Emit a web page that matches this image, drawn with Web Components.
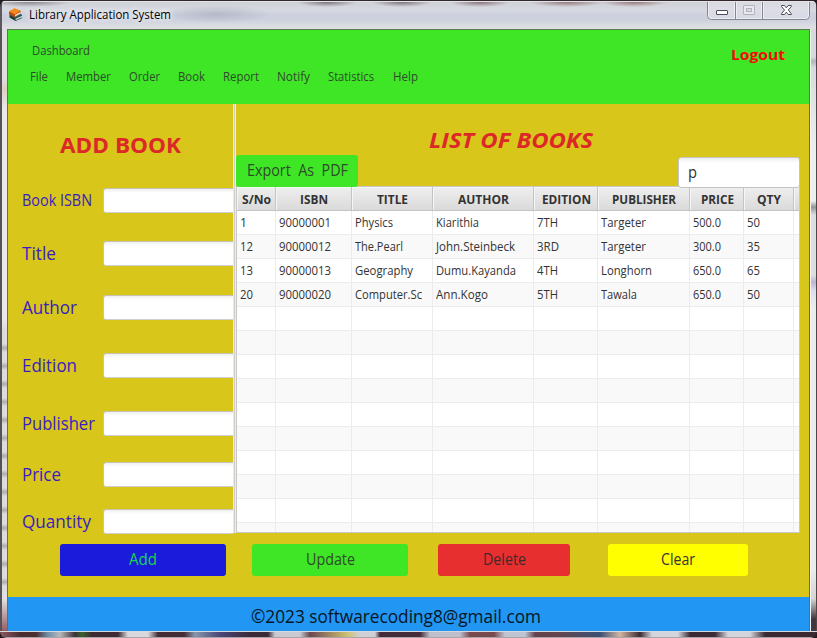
<!DOCTYPE html>
<html lang="en">
<head>
<meta charset="utf-8">
<title>Library Application System</title>
<style>
  html, body { margin: 0; width: 817px; height: 638px; overflow: hidden; background: #241c22; }
  body { font-family: "Open Sans", "Noto Sans", sans-serif; color: #333; }
</style>
</head>
<body>
<app-window></app-window>

<script>
const define = (name, html, init) => {
  const t = document.createElement('template');
  t.innerHTML = html;
  customElements.define(name, class extends HTMLElement {
    connectedCallback() {
      if (this.shadowRoot) return;
      this.attachShadow({ mode: 'open' }).append(t.content.cloneNode(true));
      if (init) init(this, this.shadowRoot);
    }
  });
};

// Text condensed to a given advance width: <fit-text w="57">
define('fit-text', `<style>
    :host { display: block; flex: none; text-align: left; }
    span { display: inline-block; white-space: pre; transform-origin: 0 50%; vertical-align: top; }
  </style><span><slot></slot></span>`, (el, root) => {
  const w = +el.getAttribute('w'), s = root.querySelector('span');
  el.style.width = w + 'px';
  const fit = () => {
    const n = s.offsetWidth;
    if (!n) return;
    s.style.transform = 'none';
    s.style.transform = `scaleX(${w / s.getBoundingClientRect().width})`;
  };
  fit();
  requestAnimationFrame(fit);
});

define('title-bar', `
  <style>
    :host { display: flex; height: 27px; padding-left: 6px; align-items: flex-start; box-sizing: border-box;
      color: #000; font-size: 12px; line-height: 20px;
      background:
        radial-gradient(ellipse 55px 9px at 215px 12px, rgba(120,125,150,.3), transparent),
        radial-gradient(ellipse 42px 5px at 28px 0, rgba(70,60,70,.5), transparent),
        radial-gradient(ellipse 30px 5px at 325px 0, rgba(70,50,62,.6), transparent),
        radial-gradient(ellipse 30px 5px at 400px 0, rgba(70,50,62,.6), transparent),
        radial-gradient(ellipse 30px 5px at 478px 0, rgba(90,50,55,.6), transparent),
        radial-gradient(ellipse 38px 5px at 565px 0, rgba(110,60,62,.6), transparent),
        radial-gradient(ellipse 34px 5px at 632px 0, rgba(110,60,62,.6), transparent),
        linear-gradient(#cfd1d6, #d6d9e1 30%, #cdd1de 48%, #cdd1de 65%, #dedfe1 95%); }
    svg { display: block; }
    .icon { margin: 5px 6px 0 0; }
    .name { margin-top: 3px; text-shadow: 0 0 5px #fff, 0 0 8px #fff; }
    .ctl { margin: 0 6px 0 auto; }
  </style>
  <svg class="icon" width="15" height="16" viewBox="0 0 15 16">
    <path d="M1.500 8 8 5l6 3v3L7.500 14 1.500 10.500z" fill="#1c4038"/>
    <path d="M7.500 11.800 14 8.800v1.500l-6.500 3z" fill="#cfe0da"/>
    <path d="M1.500 7.500 7.500 5l6.500 3-6.500 3z" fill="#1b6a86"/>
    <path d="M1 4.500v3l6 3L12.500 7V3.500z" fill="#b84d12"/>
    <path d="M7 8 12.500 5v1.400L7 9.400z" fill="#f4efe0"/>
    <path d="M1 4.300 6.500 1.300l6 2.300L7 7.400z" fill="#f58a1c"/>
  </svg>
  <fit-text class="name" w="142">Library Application System</fit-text>
  <svg class="ctl" width="103" height="19" viewBox="0 0 103 19">
    <path d="M.5 0V13.500q0 4 4 4H98.500q4 0 4-4V0" fill="rgba(225,226,234,.55)" stroke="#85858f"/>
    <path d="M1.500 0V13.500q0 3 3 3H98.500q3 0 3-3V0M27.500 0v17M29.500 0v17M54.500 0v17M56.500 0v17" fill="none" stroke="#f1f1f5" stroke-opacity=".8"/>
    <path d="M28.500 0v17M55.500 0v17" stroke="#85858f"/>
    <rect x="9.500" y="8.500" width="11" height="4" rx=".5" fill="#fff" stroke="#4b4b5a"/>
    <rect x="36.500" y="3.500" width="11" height="9" rx=".5" fill="#e8e8ee" stroke="#b2b2bc"/>
    <rect x="39.500" y="6.500" width="5" height="3" fill="#d8d9e2" stroke="#b2b2bc"/>
    <path d="M74.500 3.500h3l1.800 2.300 1.800-2.300h3.200v1L81.300 8l3 3.700v.8h-3.200l-1.800-2.300-1.800 2.300h-3v-.8l3-3.700-3-3.500z" fill="#fff" stroke="#4b4b5a"/>
  </svg>`);

define('menu-bar', `
  <style>
    :host { display: flex; flex: none; justify-content: space-between; height: 74px; background: #3ee626; box-sizing: border-box;
      padding: 10px 24px 0 22px; font-size: 12px; line-height: 22px; color: #2f4b2b; }
    nav { display: flex; gap: 18px; margin-top: 4px; }
    .dash { margin-left: 2px; }
    .logout { color: #f50b05; font-weight: 700; font-size: 15px; margin-top: 3px; }
  </style>
  <div>
    <fit-text class="dash" w="58">Dashboard</fit-text>
    <nav>
      <fit-text w="18">File</fit-text><fit-text w="45">Member</fit-text><fit-text w="31">Order</fit-text>
      <fit-text w="27">Book</fit-text><fit-text w="36">Report</fit-text><fit-text w="33">Notify</fit-text>
      <fit-text w="46">Statistics</fit-text><fit-text w="25" style="margin-left:1px">Help</fit-text>
    </nav>
  </div>
  <fit-text class="logout" w="54">Logout</fit-text>`);

define('form-field', `
  <style>
    :host { display: flex; height: 25px; color: #3a1dc0; }
    .l { width: 81px; flex: none; line-height: 24px; }
    .box { flex: 1; box-sizing: border-box; background: linear-gradient(#f0f0f0, #fff 4px); border: 1px solid #c6c4b4; border-bottom-color: #cfcfcf;
      border-right: 0; border-radius: 3px 0 0 3px; }
  </style>
  <div class="l"><slot></slot></div><div class="box"></div>`);

define('book-form', `
  <style>
    :host { display: block; width: 225px; flex: none; font-size: 18.500px; }
    h2 { margin: 0 0 0 52px; padding-top: 25px; font-size: 22px; line-height: 30px; color: #dc2828; }
    .fields { padding: 29px 0 0 14px; }
    .s { font-size: 15.500px; }
  </style>
  <h2><fit-text w="121">ADD BOOK</fit-text></h2>
  <div class="fields">
    <form-field class="s"><fit-text w="70">Book ISBN</fit-text></form-field>
    <form-field style="margin-top:28px"><fit-text w="34">Title</fit-text></form-field>
    <form-field style="margin-top:29px"><fit-text w="55">Author</fit-text></form-field>
    <form-field style="margin-top:33px"><fit-text w="55">Edition</fit-text></form-field>
    <form-field style="margin-top:33px"><fit-text w="73">Publisher</fit-text></form-field>
    <form-field style="margin-top:26px"><fit-text w="39">Price</fit-text></form-field>
    <form-field style="margin-top:22px"><fit-text w="69">Quantity</fit-text></form-field>
  </div>`);

define('book-table', `
  <style>
    :host { display: block; box-sizing: border-box; width: 564px; height: 347px; overflow: hidden; background: #fff;
      border: 1px solid #c8c8c8; font-size: 12px; }
    .r { display: grid; grid-template: 24px / 39px 76px 81px 101px 64px 92px 54px 50px 1fr; line-height: 24px; }
    .r > div { box-sizing: border-box; border-right: 1px solid #ececec; border-bottom: 1px solid #ececec; padding-left: 3px; display: flex; height: 24px; }
    .r > div:last-child { border-right: 0; }
    .r:nth-child(odd) { background: #f9f9f9; }
    .r.h { background: linear-gradient(#efefef, #d9d9d9); font-weight: 700; color: #333; line-height: 25px; }
    .r.h > div { border-color: #c4c4c4; padding: 0 0 0 1px; justify-content: center; box-shadow: inset 1px 1px #f6f6f6; }
  </style><div class="t"></div>`, (el, root) => {
  const cell = (v) => v ? `<div><fit-text w="${v[1]}">${v[0]}</fit-text></div>` : '<div></div>';
  const heads = [['S/No',29],['ISBN',28],['TITLE',31],['AUTHOR',51],['EDITION',49],['PUBLISHER',64],['PRICE',33],['QTY',24],null];
  const rows = [
    [['1',7],['90000001',52],['Physics',38],['Kiarithia',43],['7TH',21],['Targeter',45],['500.0',28],['50',13],null],
    [['12',13],['90000012',52],['The.Pearl',48],['John.Steinbeck',79],['3RD',22],['Targeter',45],['300.0',28],['35',13],null],
    [['13',13],['90000013',52],['Geography',58],['Dumu.Kayanda',80],['4TH',21],['Longhorn',51],['650.0',28],['65',13],null],
    [['20',13],['90000020',52],['Computer.Sc',67],['Ann.Kogo',52],['5TH',21],['Tawala',36],['650.0',28],['50',13],null]
  ];
  while (rows.length < 14) rows.push(Array(9).fill(null));
  root.querySelector('.t').innerHTML = `<div class="r h">${heads.map(cell).join('')}</div>` +
    rows.map(r => `<div class="r">${r.map(cell).join('')}</div>`).join('');
});

define('color-button', `
  <style>
    :host { display: flex; justify-content: center; box-sizing: border-box; height: 32px; line-height: 31px; border-radius: 3px; font-size: 15.500px; flex: none; }
  </style><slot></slot>`);

define('book-list', `
  <style>
    :host { display: block; width: 564px; flex: none; }
    h2 { margin: 0 0 0 193px; padding-top: 20px; font-size: 22px; line-height: 30px; font-style: italic; color: #dc2828; }
    .bar { display: flex; justify-content: space-between; height: 31px; margin-top: 1px; position: relative; }
    .export { width: 122px; background: #3ee626; color: #2f4b2b; }
    .search { box-sizing: border-box; width: 122px; height: 31px; margin-top: 2px; padding-left: 9px; line-height: 28px; font-size: 15.500px;
      border: 1px solid #c4c4c4; border-radius: 3px; background: linear-gradient(#eee, #fff 5px); }
  </style>
  <h2><fit-text w="164">LIST OF BOOKS</fit-text></h2>
  <div class="bar">
    <color-button class="export"><fit-text w="101">Export  As  PDF</fit-text></color-button>
    <div class="search"><fit-text w="9">p</fit-text></div>
  </div>
  <book-table></book-table>`);

define('split-line', `
  <style>:host { display: block; flex: none; width: 3px; height: 429px; background: linear-gradient(90deg, #f3eeb5 1px, #cfcfc6 1px 2px, #efede0 2px); }</style>`);

define('app-window', `
  <style>
    :host { display: grid; grid-template: 2px 27px 602px 7px / 8px 801px 8px; width: 817px; height: 638px;
      border-radius: 7px 7px 6px 6px; overflow: hidden; }
    .top { grid-column: 1 / 4; background: linear-gradient(#30282d 1px, #e4e3e5 1px); }
    title-bar { grid-column: 1 / 4; border-left: 2px solid #5c5960; border-right: 1px solid #44414a; }
    .left { border-left: 2px solid #55525a; border-right: 1px solid #686b60; box-sizing: border-box;
      background: repeating-linear-gradient(transparent 0 5px, rgba(90,85,88,.35) 9px, transparent 13px 18px) 0 310px / 100% 250px no-repeat,
        linear-gradient(#dededf 0 50px, #e0cfc0 60px, #e9e9ea 80px 290px, #dcdcdc 300px 560px, #e4e0e0 570px, #955d61); }
    .right { border-left: 1px solid #686b60; border-right: 1px solid #4a474d; box-shadow: inset 1px 0 #f6f6f6; box-sizing: border-box;
      background: linear-gradient(#d9d9db 0 28px, #b6b6b8 32px, #dadadc 39px, #eee 120px 172px, #959597 178px, #dedee0 186px 246px, #bcb5d4 253px, #dde0ea 262px, #ececec 280px 540px, #d5d3d4 570px, #42373e 590px); }
    .client { background: linear-gradient(#577b50 1px, #d8c61a 1px); display: flex; flex-direction: column; padding-top: 1px; box-sizing: border-box; min-height: 0; }
    .main { display: flex; flex: none; height: 429px; }
    .actions { display: flex; flex: none; height: 64px; padding: 11px 0 0 52px; box-sizing: border-box; }
    footer { flex: none; height: 34px; box-sizing: border-box; background: #2196f3; color: #061523; font-size: 18px; line-height: 38px; padding-left: 243px; }
    .bottom { grid-column: 1 / 4; border-radius: 0 0 6px 6px; position: relative;
      background:
        linear-gradient(#dad7da 1px, transparent 1px 6px, #aaa5a9 6px),
        linear-gradient(90deg, #8d5a5e, #4b2d32 20px 36px, #7090a8 48px, #b9b9bb 60px, #3b2f35 75px, #3c622c 82px, #3d2a32 92px 118px, #d9d9dd 128px 148px, #452c35 158px 184px, #8697ac 195px, #4b4579 220px, #3c2937 250px 268px, #c9c9d1 275px 300px, #6b4650 310px, #cfc070 347px, #cfcfd5 360px 375px, #452a38 380px 420px, #bebfca 430px 460px, #784a4e 470px 494px, #c0c4d2 505px 525px, #66434c 535px 555px, #3c5074 600px, #d2b4a0 620px, #3b2a32 640px, #d4d4dc 652px 678px, #3c2b34 690px 715px, #d4d4dc 728px 750px, #3a2931 765px); }
  </style>
  <div class="top"></div>
  <title-bar></title-bar>
  <div class="left"></div>
  <div class="client">
    <menu-bar></menu-bar>
    <div class="main">
      <book-form></book-form><split-line></split-line><book-list></book-list>
    </div>
    <div class="actions">
      <color-button style="width:166px;background:#1b1bdb;color:#18d650"><fit-text w="28">Add</fit-text></color-button>
      <color-button style="width:156px;margin-left:26px;background:#3ee626;color:#2f4b2b"><fit-text w="49">Update</fit-text></color-button>
      <color-button style="width:132px;margin-left:30px;background:#e82f2f;color:#42292b"><fit-text w="43">Delete</fit-text></color-button>
      <color-button style="width:140px;margin-left:38px;background:#ffff00;color:#333"><fit-text w="34">Clear</fit-text></color-button>
    </div>
    <footer><fit-text w="290">©2023 softwarecoding8@gmail.com</fit-text></footer>
  </div>
  <div class="right"></div>
  <div class="bottom"></div>`);
</script>
</body>
</html>
